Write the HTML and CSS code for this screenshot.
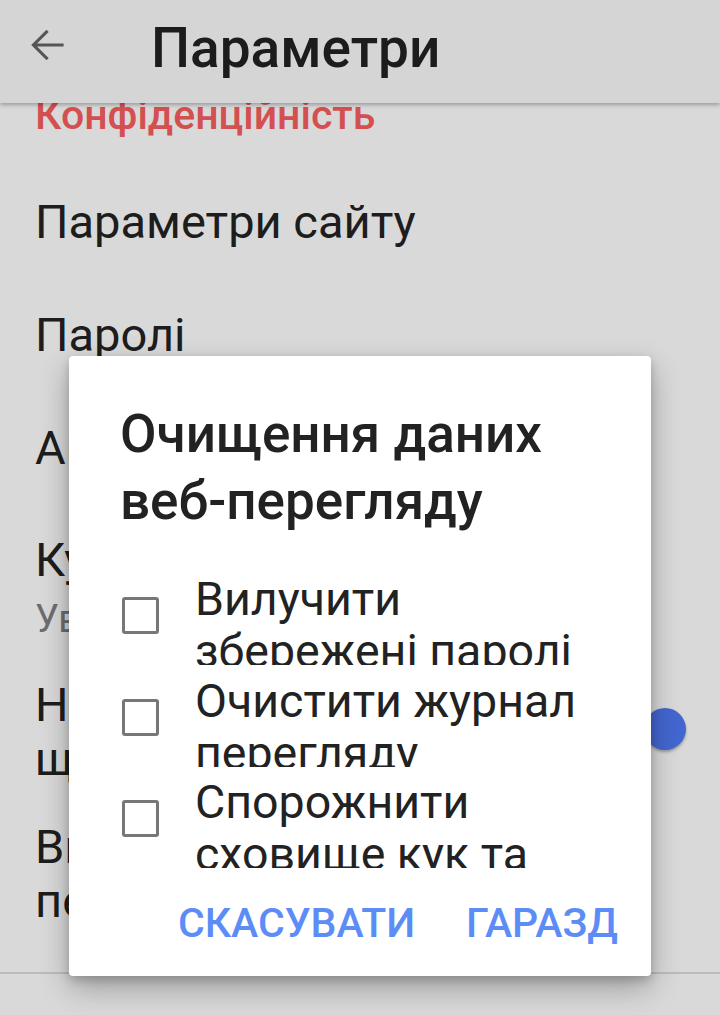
FILE: index.html
```html
<!DOCTYPE html>
<html lang="uk">
<head>
<meta charset="utf-8">
<title>Параметри</title>
<link rel="stylesheet" href="styles.css">
</head>
<body>
<div class="screen">
  <header class="appbar">
    <svg class="back" viewBox="0 0 24 24" aria-hidden="true">
      <path d="M19.5 12H5M11.8 5.2L5 12l6.8 6.8" fill="none" stroke="#666" stroke-width="1.5"/>
    </svg>
    <h1 class="appbar-title">Параметри</h1>
  </header>

  <main class="list">
    <div class="section-heading">Конфіденційність</div>
    <div class="row">Параметри сайту</div>
    <div class="row">Паролі</div>
    <div class="row">Автозаповнення форм</div>
    <div class="row row-summary">
      <div class="row-title">Куки</div>
      <div class="row-sub">Увімкнено</div>
    </div>
    <div class="row row-switch">
      <div class="row-title">Надсилати запит<br>щодо відстеження</div>
      <div class="switch"><span class="track"></span><span class="thumb"></span></div>
    </div>
    <div class="row row-last">Видалити дані<br>перегляду під час виходу</div>
    <div class="divider"></div>
  </main>

  <div class="scrim"></div>

  <div class="dialog" role="dialog">
    <h2 class="dialog-title">Очищення даних веб-перегляду</h2>
    <ul class="options">
      <li class="option"><span class="checkbox"></span><span class="option-text">Вилучити збережені паролі</span></li>
      <li class="option"><span class="checkbox"></span><span class="option-text">Очистити журнал перегляду</span></li>
      <li class="option"><span class="checkbox"></span><span class="option-text">Спорожнити сховище кук та даних сайтів</span></li>
    </ul>
    <div class="actions">
      <button class="btn">СКАСУВАТИ</button>
      <button class="btn">ГАРАЗД</button>
    </div>
  </div>
</div>
</body>
</html>
```

FILE: styles.css
```css
* { box-sizing: border-box; }
html, body { margin: 0; padding: 0; }
body {
  width: 720px;
  height: 1015px;
  overflow: hidden;
  background: #fff;
  font-family: Roboto, "Noto Sans", "Liberation Sans", sans-serif;
  color: #232323;
}
.screen {
  position: relative;
  width: 720px;
  height: 1015px;
  overflow: hidden;
  background: #fff;
}
.appbar {
  position: relative;
  z-index: 2;
  height: 103px;
  background: #fbfbfb;
  display: flex;
  align-items: center;
  box-shadow: 0 2px 4px rgba(0,0,0,0.28);
}
.back {
  width: 50px;
  height: 50px;
  margin-left: 23px;
  margin-top: -13px;
  flex: none;
}
.appbar-title {
  margin: -8px 0 0 78px;
  font-size: 55px;
  font-weight: 500;
  line-height: 64px;
  color: #222;
}
.list {
  margin-top: -11px;
  position: relative;
  z-index: 1;
}
.section-heading {
  font-size: 41px;
  line-height: 46px;
  font-weight: 500;
  color: #fa5e5e;
  padding: 0 36px 28px 35px;
}
.row {
  font-size: 47px;
  line-height: 54px;
  padding: 29px 36px 30px 35px;
  color: #232323;
}
.row-summary { padding: 28px 36px 6px 35px; }
.row-sub {
  font-size: 38px;
  line-height: 46px;
  margin-top: 9px;
  color: #808080;
}
.row-switch {
  display: flex;
  justify-content: space-between;
  padding: 30px 34px 4px 35px;
}
.switch {
  position: relative;
  flex: none;
  width: 70px;
  height: 42px;
  margin-top: 30px;
}
.track {
  position: absolute;
  left: 0;
  right: 14px;
  top: 9px;
  height: 24px;
  border-radius: 12px;
  background: #a8c3fa;
}
.thumb {
  position: absolute;
  right: 0;
  top: 0;
  width: 42px;
  height: 42px;
  border-radius: 50%;
  background: #4f79f5;
  box-shadow: 0 2px 3px rgba(0,0,0,0.3);
}
.row-last { padding: 30px 36px 44px 35px; }
.divider {
  height: 2px;
  background: #dddddd;
}
.scrim {
  position: absolute;
  inset: 0;
  z-index: 3;
  background: rgba(0,0,0,0.15);
}
.dialog {
  position: absolute;
  z-index: 4;
  left: 69px;
  top: 356px;
  width: 582px;
  height: 620px;
  background: #fff;
  border-radius: 4px;
  box-shadow: 0 12px 30px rgba(0,0,0,0.28), 0 4px 10px rgba(0,0,0,0.18);
  display: flex;
  flex-direction: column;
}
.dialog-title {
  margin: 0;
  padding: 45px 40px 0 51px;
  font-size: 53px;
  line-height: 67px;
  font-weight: 500;
  color: #222;
}
.options {
  list-style: none;
  margin: 38px 0 0;
  padding: 0;
}
.option {
  height: 101.5px;
  display: flex;
  align-items: flex-start;
  padding: 0 33px 0 53px;
}
.checkbox {
  flex: none;
  width: 37px;
  height: 37px;
  margin-top: 24px;
  border: 3px solid #777;
  border-radius: 3px;
}
.option-text {
  margin-left: 36px;
  height: 92px;
  overflow: hidden;
  font-size: 46.5px;
  line-height: 52px;
  color: #222;
}
.actions {
  display: flex;
  justify-content: flex-end;
  gap: 51px;
  padding: 21px 33px 29.5px;
}
.btn {
  border: 0;
  background: none;
  padding: 0;
  margin: 0;
  font-family: Roboto, "Noto Sans", "Liberation Sans", sans-serif;
  font-size: 41px;
  line-height: 48px;
  font-weight: 500;
  color: #5c8df6;
}
```
